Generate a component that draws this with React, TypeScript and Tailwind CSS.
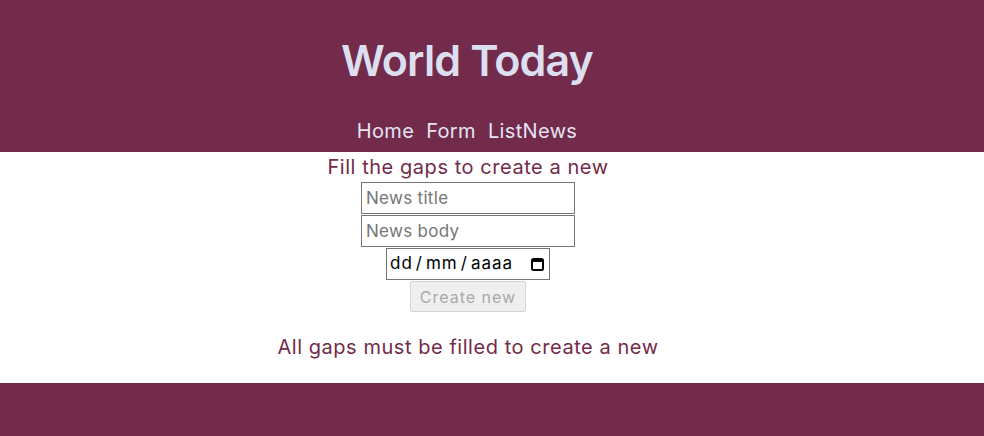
export default function App() {
  return (
    <div className="min-h-screen bg-white font-['Inter','Noto_Sans',sans-serif]">
      <header className="h-[152px] bg-[#722b4a]">
        <div className="w-[934px] flex flex-col items-center">
          <h1 className="mt-[30px] text-[43px] leading-[60px] font-semibold text-[#dcdff0] tracking-[-0.9px]">
            World Today
          </h1>
          <nav className="mt-[27px] flex gap-3 text-[20px] leading-[28px] tracking-[0.35px] text-[#e4e4f6]">
            <a href="#">Home</a>
            <a href="#">Form</a>
            <a href="#">ListNews</a>
          </nav>
        </div>
      </header>

      <main className="w-[936px] flex flex-col items-center text-[#722b4a] tracking-[0.55px]">
        <p className="text-[20px] leading-[30px]">Fill the gaps to create a new</p>
        <input
          className="w-[214px] h-[32px] border border-[#767676] px-1 text-[17px] tracking-[0.3px] text-black placeholder:text-[#757575] outline-none"
          placeholder="News title"
        />
        <input
          className="mt-px w-[214px] h-[32px] border border-[#767676] px-1 text-[17px] tracking-[0.3px] text-black placeholder:text-[#757575] outline-none"
          placeholder="News body"
        />
        <div className="mt-px w-[164px] h-[32px] border border-[#767676] flex items-center justify-between pl-[3px] pr-[5px] text-[17px] text-black tracking-[1px]">
          <span>
            dd<span className="mx-[3px]">/</span>mm<span className="mx-[3px]">/</span>aaaa
          </span>
          <svg width="13" height="14" viewBox="0 0 13 14" fill="none">
            <rect x="1" y="2" width="11" height="11" rx="1.5" stroke="black" strokeWidth="2" />
            <rect x="1" y="2" width="11" height="3" fill="black" />
          </svg>
        </div>
        <button
          disabled
          className="mt-px w-[116px] h-[31px] bg-[#efefef] border border-[#d4d4d4] rounded-[2px] text-[16px] tracking-[1px] text-[#a9a9a9]"
        >
          Create new
        </button>
        <p className="mt-[20px] text-[20px] leading-[30px]">All gaps must be filled to create a new</p>
      </main>

      <footer className="mt-[21px] h-[53px] bg-[#722b4a]" />
    </div>
  );
}
